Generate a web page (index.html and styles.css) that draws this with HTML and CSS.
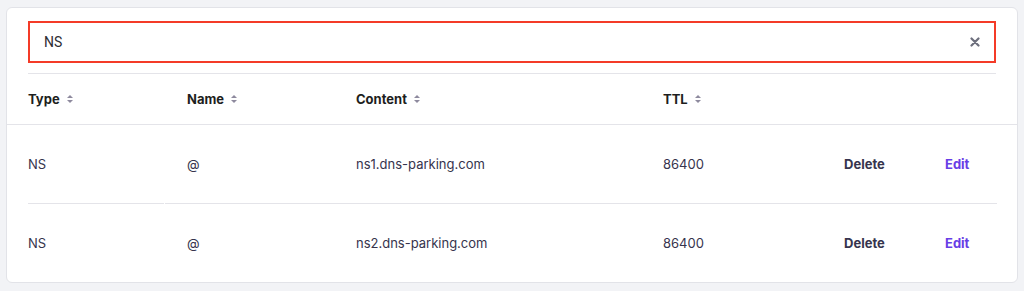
FILE: index.html
```html
<!DOCTYPE html>
<html>
  <head>
    <meta charset="UTF-8" />
    <title>DNS records</title>
    <link rel="stylesheet" href="styles.css">
  </head>

  <body>
    <div class="card">
      <div class="search">
        <input type="text" value="NS" />
        <span class="clear">
          <svg width="10" height="10" viewBox="0 0 10 10">
            <path d="M1.5 1.5 L8.5 8.5 M8.5 1.5 L1.5 8.5" stroke="#6d6f7d" stroke-width="2.2" stroke-linecap="round" />
          </svg>
        </span>
      </div>
      <div class="divider"></div>

      <div class="table">
        <div class="row head">
          <div class="cell first">Type <span class="sort"></span></div>
          <div class="cell second">Name <span class="sort"></span></div>
          <div class="cell">Content <span class="sort"></span></div>
          <div class="cell">TTL <span class="sort"></span></div>
          <div class="cell"></div>
          <div class="cell"></div>
        </div>

        <div class="row">
          <div class="cell first">NS</div>
          <div class="cell second">@</div>
          <div class="cell">ns1.dns-parking.com</div>
          <div class="cell">86400</div>
          <div class="cell"><a class="delete">Delete</a></div>
          <div class="cell"><a class="edit">Edit</a></div>
        </div>

        <div class="row last">
          <div class="cell first">NS</div>
          <div class="cell second">@</div>
          <div class="cell">ns2.dns-parking.com</div>
          <div class="cell">86400</div>
          <div class="cell"><a class="delete">Delete</a></div>
          <div class="cell"><a class="edit">Edit</a></div>
        </div>
      </div>
    </div>
  </body>
</html>
```

FILE: styles.css
```css
body {
  margin: 0;
  padding: 7px 6px 8px 6px;
  background-color: #f2f3f6;
  font-family: "Inter", "DejaVu Sans", sans-serif;
  color: #36344d;
}

.card {
  background-color: white;
  border: 1px solid #e2e3e8;
  border-radius: 6px;
  padding-top: 13px;
  box-sizing: border-box;
  height: 276px;
}

.search {
  display: flex;
  align-items: center;
  margin: 0 21px;
  height: 42px;
  border: 2px solid #f43b28;
  box-sizing: border-box;
  padding: 0 14px;
}

.search input {
  flex: 1;
  border: 0;
  outline: none;
  font-family: "Roboto", "Liberation Sans", sans-serif;
  font-size: 14px;
  color: #2d2d33;
  padding: 0;
}

.clear {
  display: flex;
  align-items: center;
}

.divider {
  margin: 10px 21px 0 21px;
  border-top: 1px solid #e4e4e9;
}

.row {
  display: grid;
  grid-template-columns: 137px 191px 307px 181px 101px 52px;
  margin: 0 21px;
}

.head {
  height: 50px;
  margin: 0;
  padding: 0 21px;
  border-bottom: 1px solid #e4e4e9;
}

.cell {
  display: flex;
  align-items: center;
  font-size: 13px;
  border-bottom: 1px solid #e4e4e9;
  height: 78px;
}

.row .cell.first {
  margin-right: 1px;
}

.cell.second {
  padding-left: 22px;
}

.head .cell {
  height: 49px;
  border-bottom: 0;
  font-weight: 700;
  color: #1d1e20;
}

.last .cell {
  border-bottom: 0;
}

.sort {
  display: inline-block;
  margin-left: 7px;
  width: 7px;
  height: 8px;
  position: relative;
}

.sort::before,
.sort::after {
  content: "";
  position: absolute;
  left: 0;
  border-left: 3.5px solid transparent;
  border-right: 3.5px solid transparent;
}

.sort::before {
  top: 0;
  border-bottom: 3px solid #8e8a9e;
}

.sort::after {
  bottom: 0;
  border-top: 3px solid #8e8a9e;
}

.delete {
  font-weight: 700;
  color: #36344d;
}

.edit {
  font-weight: 700;
  color: #673de6;
}
```
